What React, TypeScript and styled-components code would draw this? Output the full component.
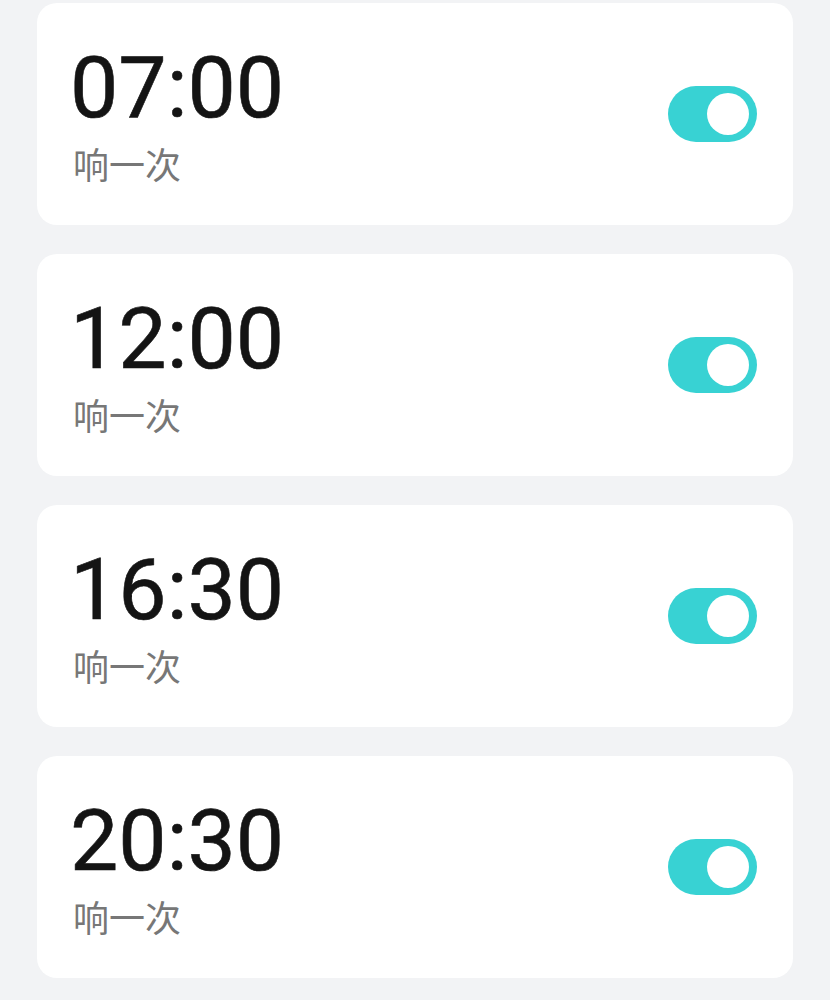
import React from 'react';
import styled, { createGlobalStyle } from 'styled-components';

const GlobalStyle = createGlobalStyle`
  html, body {
    margin: 0;
    padding: 0;
    background: #f2f3f5;
  }
`;

const Page = styled.div`
  width: 830px;
  min-height: 1000px;
  box-sizing: border-box;
  padding: 3px 37px 0 37px;
  display: flex;
  flex-direction: column;
  gap: 29px;
  background: #f2f3f5;
  font-family: Roboto, "Noto Sans CJK SC", sans-serif;
`;

const AlarmCard = styled.div`
  height: 222px;
  box-sizing: border-box;
  background: #ffffff;
  border-radius: 20px;
  padding: 0 36px 0 33px;
  display: flex;
  justify-content: space-between;
  align-items: flex-start;
`;

const Info = styled.div`
  display: flex;
  flex-direction: column;
  padding-top: 42px;
`;

const Time = styled.div`
  font-family: Roboto, sans-serif;
  font-size: 86px;
  line-height: 1;
  font-weight: 400;
  color: #141414;
  -webkit-text-stroke: 0.6px #141414;
`;

const Repeat = styled.div`
  margin-top: 14px;
  margin-left: 3px;
  font-family: "Noto Sans CJK SC", sans-serif;
  font-size: 36px;
  line-height: 1;
  color: #777777;
`;

const Switch = styled.div<{ $on: boolean }>`
  align-self: center;
  width: 89px;
  height: 56px;
  border-radius: 28px;
  box-sizing: border-box;
  padding: 7px 8px;
  display: flex;
  justify-content: ${p => (p.$on ? 'flex-end' : 'flex-start')};
  background: ${p => (p.$on ? '#38d2d3' : '#d9d9d9')};
`;

const Knob = styled.div`
  width: 42px;
  height: 42px;
  border-radius: 50%;
  background: #ffffff;
`;

const alarms = [
  { time: '07:00', repeat: '响一次', on: true },
  { time: '12:00', repeat: '响一次', on: true },
  { time: '16:30', repeat: '响一次', on: true },
  { time: '20:30', repeat: '响一次', on: true },
];

const App: React.FC = () => {
  return (
    <>
      <GlobalStyle />
      <Page>
        {alarms.map(a => (
          <AlarmCard key={a.time}>
            <Info>
              <Time>{a.time}</Time>
              <Repeat>{a.repeat}</Repeat>
            </Info>
            <Switch $on={a.on}>
              <Knob />
            </Switch>
          </AlarmCard>
        ))}
      </Page>
    </>
  );
};

export default App;
